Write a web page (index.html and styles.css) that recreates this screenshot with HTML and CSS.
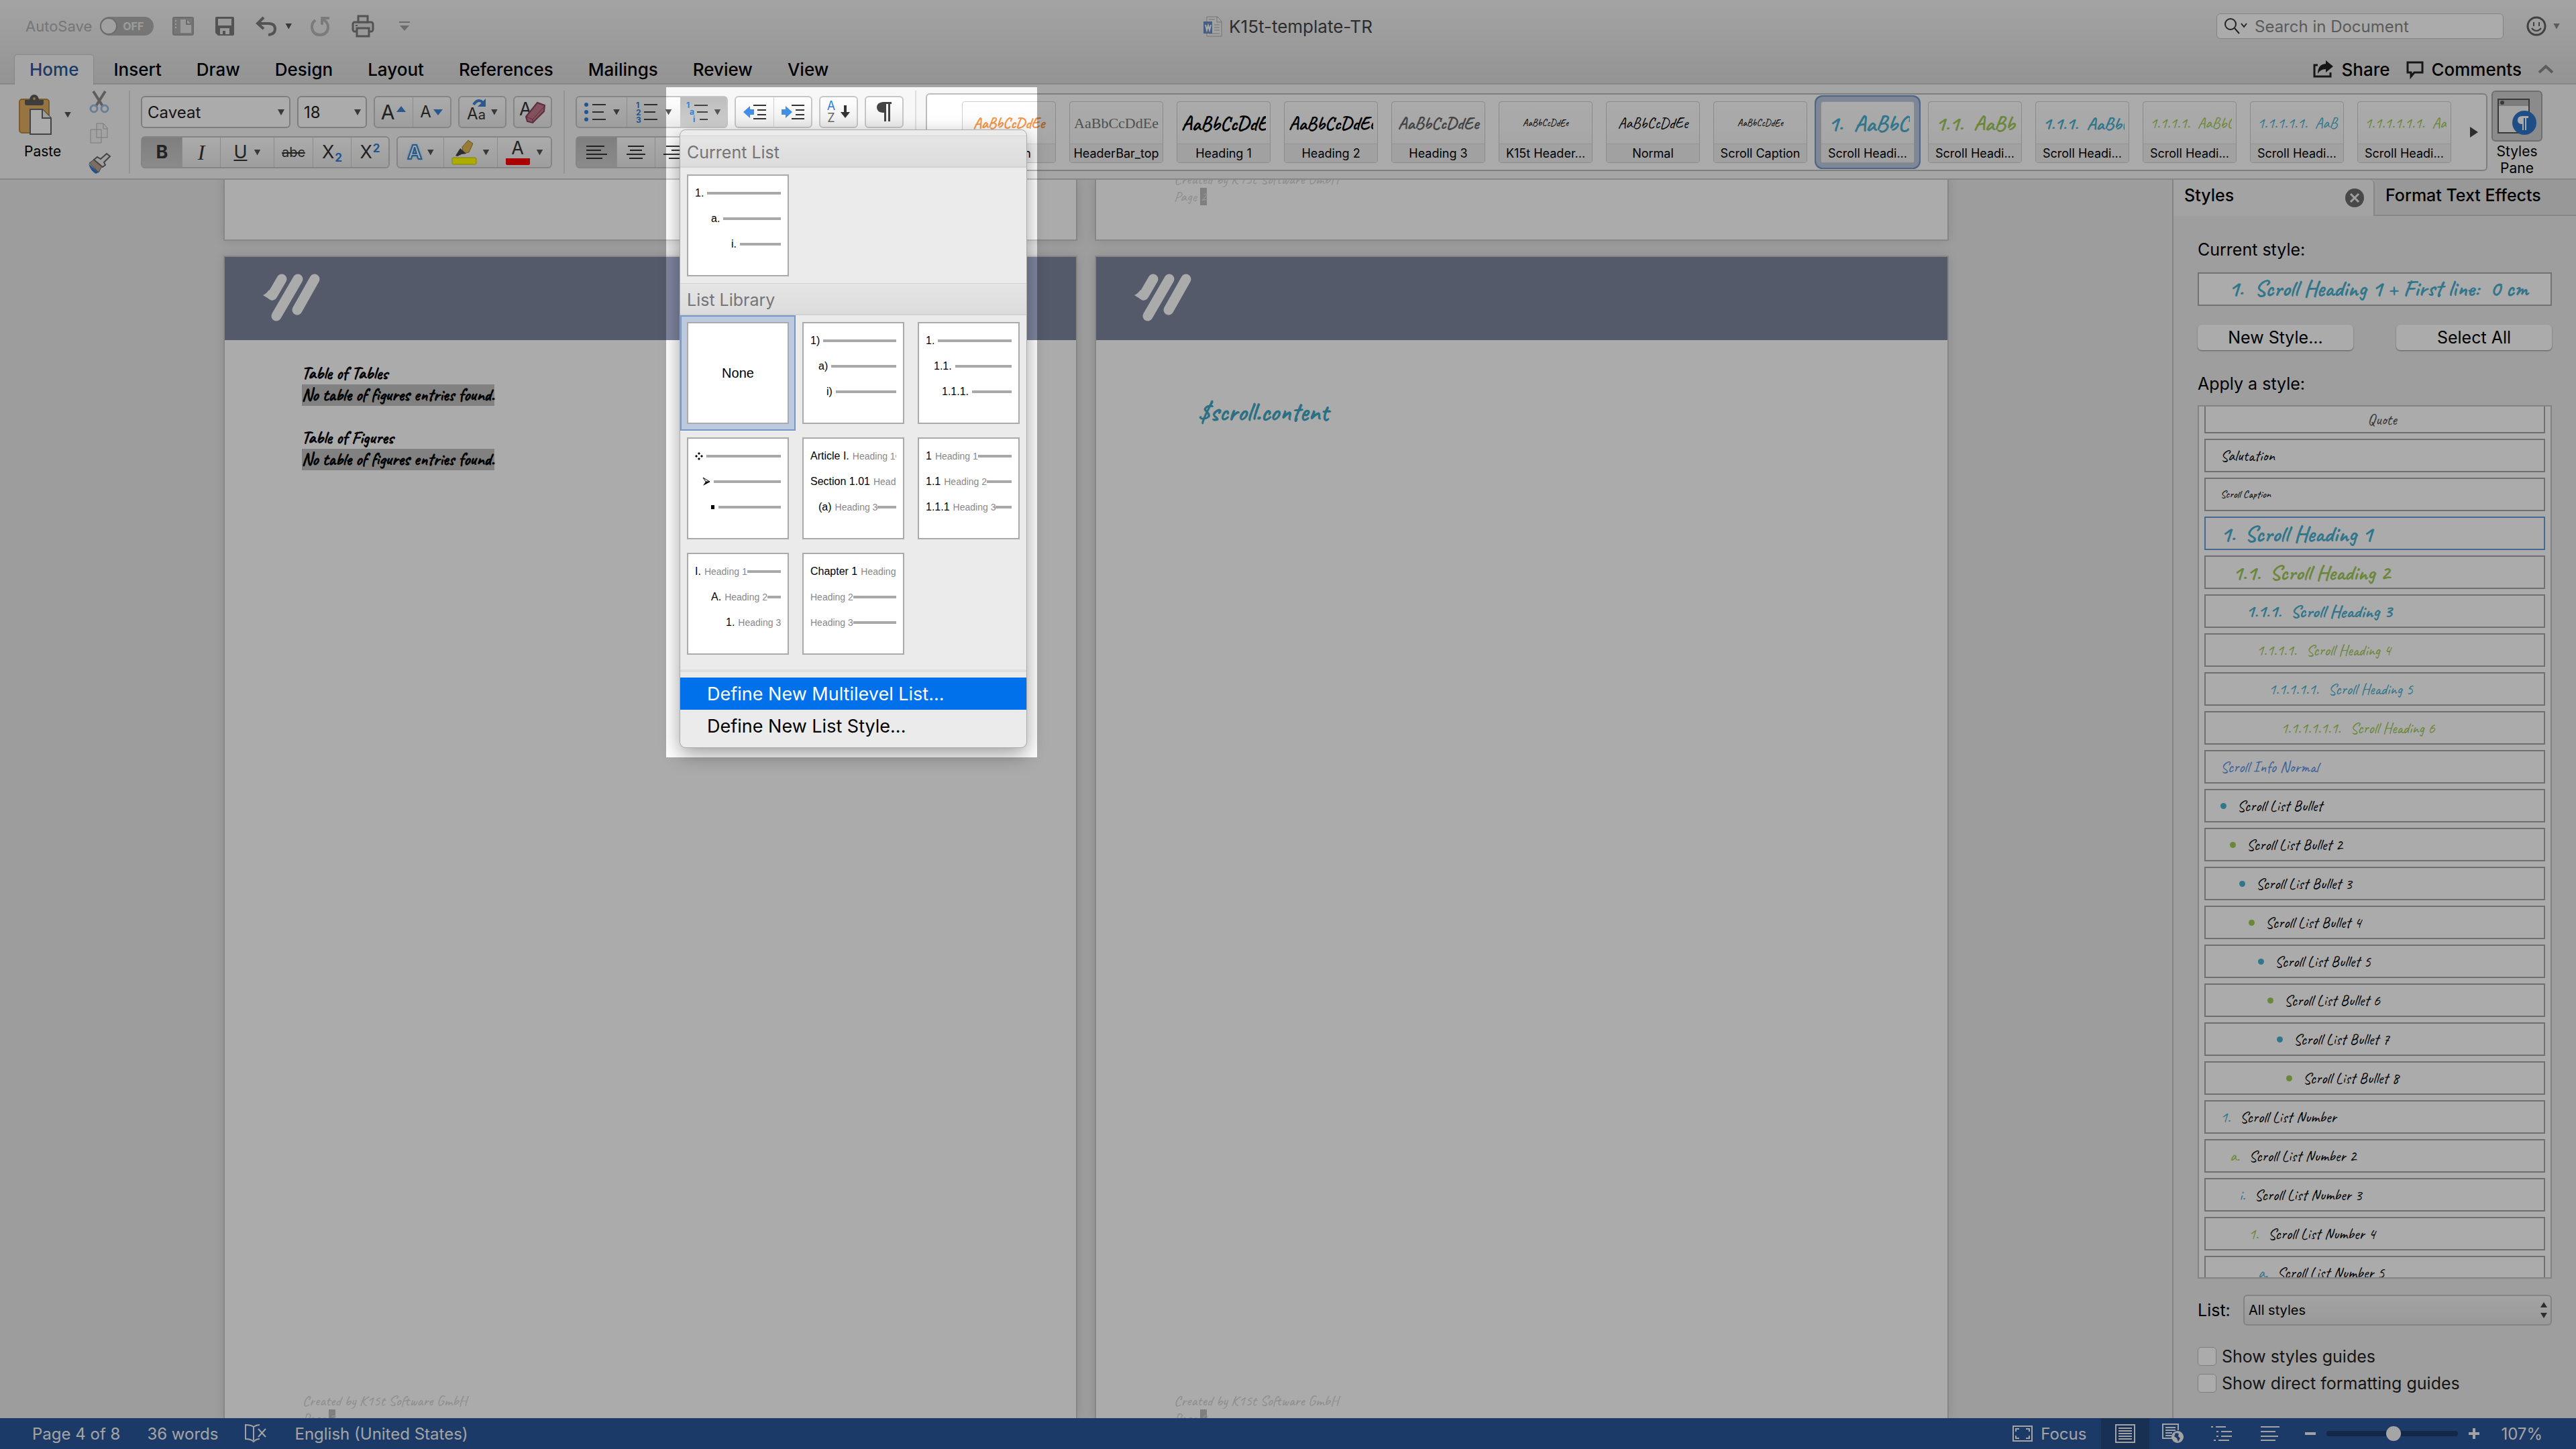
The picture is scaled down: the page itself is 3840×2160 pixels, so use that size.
FILE: index.html
```html
<!DOCTYPE html>
<html lang="en">
<head>
    <meta charset="UTF-8">
    <meta name="viewport" content="width=device-width, initial-scale=1.0">
    <title>K15t-template-TR</title>
    <link rel="stylesheet" href="styles.css">
</head>
<body>
    <header class="titlebar">
        <div class="quick-row">
            <div class="quick-access">
                <label class="autosave">AutoSave
                    <span class="switch"><input type="checkbox"><span class="knob"></span>OFF</span>
                </label>
                <button type="button" class="icon-btn" aria-label="Document gallery">
                    <svg width="32" height="28" viewBox="0 0 32 28"><rect x="1" y="1" width="30" height="26" rx="2" fill="#b0b0b0" stroke="#a0a0a0" stroke-width="2"/><path d="M12 4h9l7 7v13H12z" fill="#e4e4e4"/><path d="M21 4v7h7" fill="none" stroke="#a0a0a0" stroke-width="2"/><path d="M5 5v2M5 10v2M5 15v2" stroke="#eee" stroke-width="2"/></svg>
                </button>
                <button type="button" class="icon-btn" aria-label="Save">
                    <svg width="28" height="28" viewBox="0 0 28 28"><path d="M0 2q0-2 2-2h24q2 0 2 2v24q0 2-2 2H4l-4-4z" fill="#7c7c7c"/><path d="M4 3h20v10H4z M7 17h14v9h-6v-5h-4v5H7z" fill="#e6e6e6"/></svg>
                </button>
                <button type="button" class="icon-btn undo" aria-label="Undo">
                    <svg width="32" height="30" viewBox="0 0 32 30"><path d="M12 2L3 11l9 8M3 11h16q10 0 10 8t-10 9" fill="none" stroke="#7c7c7c" stroke-width="4"/></svg>
                    <span class="caret"></span>
                </button>
                <button type="button" class="icon-btn" aria-label="Redo">
                    <svg width="30" height="30" viewBox="0 0 30 30"><path d="M7 6q-6 5-5 12 2 10 12 10t12-10q1-9-8-13M17 13V3h11" fill="none" stroke="#b8b8b8" stroke-width="4"/></svg>
                </button>
                <button type="button" class="icon-btn" aria-label="Print">
                    <svg width="32" height="32" viewBox="0 0 32 32"><rect x="1" y="10" width="30" height="14" rx="3" fill="#e0e0e0" stroke="#7c7c7c" stroke-width="3"/><path d="M9 1h14v9H9z M7 19h18v12H7z" fill="#e6e6e6" stroke="#7c7c7c" stroke-width="3"/><path d="M5 15h3" stroke="#7c7c7c" stroke-width="2"/></svg>
                </button>
                <button type="button" class="icon-btn customize" aria-label="Customize toolbar">
                    <svg width="16" height="16" viewBox="0 0 16 16"><path d="M0 1h16v2H0z M1 7h14l-7 8z" fill="#a2a2a2"/></svg>
                </button>
            </div>
            <div class="doc-title">
                <svg width="28" height="31" viewBox="0 0 28 31"><path d="M5 1h16l6 7v22H5z" fill="#f2f2f2" stroke="#aaa" stroke-width="1"/><path d="M20 1v8h7M16 13h8M16 17h8M16 21h8M8 26h16M8 5h9" fill="none" stroke="#aaa" stroke-width="1"/><rect y="8" width="13" height="18" fill="#6a8cc4"/><path d="M3 13l2 8 2-7 2 7 2-8" fill="none" stroke="#fff" stroke-width="2"/></svg>
                <span>K15t-template-TR</span>
            </div>
            <div class="title-right">
                <label class="search">
                    <svg width="36" height="26" viewBox="0 0 36 26"><circle cx="10" cy="10" r="8" fill="none" stroke="#333" stroke-width="2"/><path d="M16 16l7 8M26 9l4 5 4-5" fill="none" stroke="#333" stroke-width="2"/></svg>
                    <input type="search" placeholder="Search in Document" aria-label="Search in Document">
                </label>
                <button type="button" class="icon-btn smiley" aria-label="Feedback">
                    <svg width="30" height="30" viewBox="0 0 30 30"><circle cx="15" cy="15" r="13" fill="none" stroke="#606060" stroke-width="3"/><path d="M11 9v6M19 9v6M8 18q7 8 14 0" fill="none" stroke="#606060" stroke-width="2"/></svg>
                    <span class="caret pale"></span>
                </button>
            </div>
        </div>
        <div class="tab-row">
            <nav class="tabs">
                <button type="button" class="tab active">Home</button>
                <button type="button" class="tab">Insert</button>
                <button type="button" class="tab">Draw</button>
                <button type="button" class="tab">Design</button>
                <button type="button" class="tab">Layout</button>
                <button type="button" class="tab">References</button>
                <button type="button" class="tab">Mailings</button>
                <button type="button" class="tab">Review</button>
                <button type="button" class="tab">View</button>
            </nav>
            <div class="tab-actions">
                <button type="button" class="text-btn">
                    <svg width="30" height="26" viewBox="0 0 30 26"><path d="M7 7H2v17h24v-6" fill="none" stroke="#222" stroke-width="3"/><path d="M19 0l11 9-11 9v-5q-8 0-12 7 0-14 12-15z" fill="#222"/></svg>
                    Share
                </button>
                <button type="button" class="text-btn">
                    <svg width="26" height="25" viewBox="0 0 26 25"><path d="M2 2h22v15H12l-5 6v-6H2z" fill="none" stroke="#222" stroke-width="3"/></svg>
                    Comments
                </button>
                <button type="button" class="icon-btn" aria-label="Collapse ribbon">
                    <svg width="24" height="14" viewBox="0 0 24 14"><path d="M2 12l10-9 10 9" fill="none" stroke="#8a8a8a" stroke-width="4"/></svg>
                </button>
            </div>
        </div>
    </header>

    <section class="ribbon">
        <div class="paste-group">
            <button type="button" class="paste">
                <span class="paste-icon">
                    <svg width="50" height="60" viewBox="0 0 50 60"><rect x="1" y="7" width="44" height="50" rx="4" fill="#e3ad62" stroke="#b98840" stroke-width="2"/><path d="M9 8h7q1-8 7-8t7 8h7v5q0 3-3 3H12q-3 0-3-3z" fill="#5b5b5b"/><circle cx="23" cy="6" r="2" fill="#e3ad62"/><path d="M17 22h18l13 13v24H17z" fill="#fff" stroke="#666" stroke-width="2"/><path d="M35 22v13h13" fill="#eee" stroke="#666" stroke-width="2"/></svg>
                    <span class="caret"></span>
                </span>
                <span class="paste-label">Paste</span>
            </button>
            <div class="clip-tools">
                <button type="button" class="icon-btn" aria-label="Cut"><svg width="30" height="34" viewBox="0 0 30 34"><path d="M6 1l14 22M24 1L10 23" stroke="#8c8c8c" stroke-width="4"/><circle cx="7" cy="27" r="5" fill="none" stroke="#9dbbe2" stroke-width="3"/><circle cx="23" cy="27" r="5" fill="none" stroke="#9dbbe2" stroke-width="3"/></svg></button>
                <button type="button" class="icon-btn" aria-label="Copy"><svg width="28" height="32" viewBox="0 0 28 32"><path d="M1 10h16v20H1z M10 1h10l6 7v14H10z M20 1v8h6" fill="#f4f4f4" stroke="#b4b4b4" stroke-width="1"/></svg></button>
                <button type="button" class="icon-btn" aria-label="Format painter"><svg width="34" height="30" viewBox="0 0 34 30"><path d="M1 15l15 13-4 2Q4 26 1 15z" fill="#3b7ac8"/><path d="M2 14l7-5 12 10-5 9z" fill="#b9a590" stroke="#666" stroke-width="1"/><path d="M9 9l5-4 5 3 9-8 5 4-9 9 2 4-4 3z" fill="#eee" stroke="#666" stroke-width="2"/></svg></button>
            </div>
        </div>

        <div class="sep"></div>

        <div class="tool-group font-tools">
            <div class="tool-row">
                <span class="combo combo-font"><select aria-label="Font"><option>Caveat</option></select><span class="caret"></span></span>
                <span class="combo combo-size"><select aria-label="Font size"><option>18</option></select><span class="caret"></span></span>
                <div class="btn-set">
                    <button type="button" class="cell w56"><span class="glyph big">A</span><svg width="16" height="22" viewBox="0 0 16 22"><path d="M1 11L8 2l7 9z" fill="#3f83d6"/></svg></button>
                    <button type="button" class="cell w56"><span class="glyph">A</span><svg width="16" height="12" viewBox="0 0 16 12"><path d="M1 2h14l-7 9z" fill="#3f83d6"/></svg></button>
                </div>
                <div class="btn-set">
                    <button type="button" class="cell w68" aria-label="Change case"><span class="case-glyph">A<small>a</small><svg width="22" height="14" viewBox="0 0 22 14"><path d="M2 10Q8 0 16 7" fill="none" stroke="#3f83d6" stroke-width="4"/><path d="M20 1v12H8z" fill="#3f83d6"/></svg></span><span class="caret"></span></button>
                </div>
                <div class="btn-set">
                    <button type="button" class="cell w54" aria-label="Clear formatting"><span class="clear-glyph">A<svg width="32" height="34" viewBox="0 0 32 34"><path d="M2 23L19 2l11 4-1 9-17 17-8-2z" fill="#c4788c" stroke="#8c4258" stroke-width="2"/><path d="M2 23l10 4 18-20M12 27v5" fill="none" stroke="#8c4258" stroke-width="1"/></svg></span></button>
                </div>
            </div>
            <div class="tool-row">
                <div class="btn-set">
                    <button type="button" class="cell w59 pressed"><b>B</b></button>
                    <button type="button" class="cell w57 serif"><i>I</i></button>
                    <button type="button" class="cell w80"><u>U</u><span class="caret split"></span></button>
                    <button type="button" class="cell w58 small"><s>abc</s></button>
                    <button type="button" class="cell w57">X<sub>2</sub></button>
                    <button type="button" class="cell w56">X<sup>2</sup></button>
                </div>
                <div class="btn-set">
                    <button type="button" class="cell w68"><span class="effects">A</span><span class="caret"></span></button>
                    <button type="button" class="cell w80" aria-label="Highlight"><svg width="36" height="38" viewBox="0 0 36 38"><path d="M15 11L24 1l7 5-6 13-9 2z" fill="#e0b94e" stroke="#a58130" stroke-width="1"/><path d="M12 13l9 8-7 1-6 3-3-1z" fill="#444"/><rect y="27" width="36" height="10" rx="2" fill="#ffff00" stroke="#c6c600" stroke-width="1"/></svg><span class="caret split"></span></button>
                    <button type="button" class="cell w80"><span class="color-glyph">A</span><span class="caret split"></span></button>
                </div>
            </div>
        </div>

        <div class="sep"></div>

        <div class="tool-group">
            <div class="tool-row">
                <div class="btn-set">
                    <button type="button" class="cell w74" aria-label="Bullets"><svg width="34" height="30" viewBox="0 0 34 30"><g fill="#2f7fdb"><circle cx="4" cy="4" r="3"/><circle cx="4" cy="15" r="3"/><circle cx="4" cy="26" r="3"/></g><path d="M13 4h20M13 15h17M13 26h20" stroke="#444" stroke-width="2"/></svg><span class="caret split"></span></button>
                    <button type="button" class="cell w80" aria-label="Numbering"><svg width="34" height="32" viewBox="0 0 34 32"><g class="svg-num" font-size="12"><text x="0" y="10">1</text><text x="0" y="21">2</text><text x="0" y="32">3</text></g><path d="M12 5h20M12 16h17M12 27h20" stroke="#444" stroke-width="2"/></svg><span class="caret split"></span></button>
                    <div class="menu-anchor">
                        <button type="button" class="cell w69 pressed" aria-label="Multilevel list" aria-expanded="true"><svg width="34" height="32" viewBox="0 0 34 32"><g class="svg-num" font-size="12"><text x="0" y="10">1</text><text x="5" y="20">a</text><text x="10" y="31">i</text></g><path d="M12 6h20M16 16h16M20 27h12" stroke="#444" stroke-width="2"/></svg><span class="caret"></span></button>

                        <div class="menu">
                            <h2 class="menu-head">Current List</h2>
                            <div class="tiles">
                                <button type="button" class="tile">
                                    <span class="line">1.<i class="bar"></i></span>
                                    <span class="line in2">a.<i class="bar"></i></span>
                                    <span class="line in4">i.<i class="bar"></i></span>
                                </button>
                            </div>
                            <h2 class="menu-head">List Library</h2>
                            <div class="tiles">
                                <button type="button" class="tile none chosen">None</button>
                                <button type="button" class="tile">
                                    <span class="line">1)<i class="bar"></i></span>
                                    <span class="line in1">a)<i class="bar"></i></span>
                                    <span class="line in2">i)<i class="bar"></i></span>
                                </button>
                                <button type="button" class="tile">
                                    <span class="line">1.<i class="bar"></i></span>
                                    <span class="line in1">1.1.<i class="bar"></i></span>
                                    <span class="line in2">1.1.1.<i class="bar"></i></span>
                                </button>
                                <button type="button" class="tile">
                                    <span class="line"><svg width="12" height="12" viewBox="0 0 12 12"><path d="M6 0l2 2-2 2-2-2z M6 8l2 2-2 2-2-2z M2 4l2 2-2 2-2-2z M10 4l2 2-2 2-2-2z"/></svg><i class="bar"></i></span>
                                    <span class="line in1"><svg width="11" height="12" viewBox="0 0 11 12"><path d="M0 0l10 6H4z" fill="#fff" stroke="#000"/><path d="M0 12l11-6H4z"/></svg><i class="bar"></i></span>
                                    <span class="line in2"><svg width="6" height="6" viewBox="0 0 6 6"><path d="M0 0h5v6H0z"/></svg><i class="bar"></i></span>
                                </button>
                                <button type="button" class="tile">
                                    <span class="line">Article I.<em>Heading 1</em><i class="bar"></i></span>
                                    <span class="line">Section 1.01<em>Headi</em></span>
                                    <span class="line in1">(a)<em>Heading 3</em><i class="bar"></i></span>
                                </button>
                                <button type="button" class="tile">
                                    <span class="line">1<em>Heading 1</em><i class="bar"></i></span>
                                    <span class="line">1.1<em>Heading 2</em><i class="bar"></i></span>
                                    <span class="line">1.1.1<em>Heading 3</em><i class="bar"></i></span>
                                </button>
                                <button type="button" class="tile">
                                    <span class="line">I.<em>Heading 1</em><i class="bar"></i></span>
                                    <span class="line in2">A.<em>Heading 2</em><i class="bar"></i></span>
                                    <span class="line in3">1.<em>Heading 3</em></span>
                                </button>
                                <button type="button" class="tile">
                                    <span class="line">Chapter 1<em>Heading</em></span>
                                    <span class="line"><em>Heading 2</em><i class="bar"></i></span>
                                    <span class="line"><em>Heading 3</em><i class="bar"></i></span>
                                </button>
                            </div>
                            <div class="menu-rule"></div>
                            <button type="button" class="menu-item current">Define New Multilevel List...</button>
                            <button type="button" class="menu-item">Define New List Style...</button>
                        </div>
                        <div class="spotlight"></div>
                    </div>
                </div>
                <div class="btn-set">
                    <button type="button" class="cell w56" aria-label="Decrease indent"><svg width="34" height="24" viewBox="0 0 34 24"><path d="M0 12l10-9v5h6v8h-6v5z" fill="#3f8ee8"/><path d="M15 2h19M21 9h13M21 16h13M15 22h19" stroke="#333" stroke-width="2"/></svg></button>
                    <button type="button" class="cell w56" aria-label="Increase indent"><svg width="34" height="24" viewBox="0 0 34 24"><path d="M16 12L6 3v5H0v8h6v5z" fill="#3f8ee8"/><path d="M15 2h19M21 9h13M21 16h13M15 22h19" stroke="#333" stroke-width="2"/></svg></button>
                </div>
                <div class="btn-set">
                    <button type="button" class="cell w54"><span class="sort-glyph"><span>A</span><span>Z</span></span><svg width="14" height="20" viewBox="0 0 14 20"><path d="M7 0v12" stroke="#333" stroke-width="4"/><path d="M0 10h14l-7 9z" fill="#333"/></svg></button>
                </div>
                <div class="btn-set">
                    <button type="button" class="cell w54" aria-label="Show formatting marks"><svg width="24" height="30" viewBox="0 0 24 30"><path d="M23 0H10Q1 1 1 8t9 8h2v13h3V3h3v26h3V3h2z" fill="#444"/></svg></button>
                </div>
            </div>
            <div class="tool-row">
                <div class="btn-set">
                    <button type="button" class="cell w59 pressed" aria-label="Align left"><svg width="32" height="22" viewBox="0 0 32 22"><path d="M0 2h27M0 8h22M0 14h31M0 20h24" stroke="#333" stroke-width="2"/></svg></button>
                    <button type="button" class="cell w57" aria-label="Center"><svg width="30" height="22" viewBox="0 0 30 22"><path d="M3 2h24M6 8h18M1 14h28M5 20h20" stroke="#333" stroke-width="2"/></svg></button>
                    <button type="button" class="cell w57" aria-label="Align right"><svg width="32" height="22" viewBox="0 0 32 22"><path d="M4 2h28M12 8h20M0 14h32M8 20h24" stroke="#333" stroke-width="2"/></svg></button>
                </div>
            </div>
        </div>

        <div class="sep"></div>

        <div class="gallery">
            <div class="cards">
                <button type="button" class="card"><span class="preview size-m bold orange">AaBbCcDdEe</span><span class="card-name">Caption</span></button>
                <button type="button" class="card"><span class="preview roman">AaBbCcDdEe</span><span class="card-name">HeaderBar_top</span></button>
                <button type="button" class="card"><span class="preview size-xl bold">AaBbCcDdEe</span><span class="card-name">Heading 1</span></button>
                <button type="button" class="card"><span class="preview size-l bold">AaBbCcDdEe</span><span class="card-name">Heading 2</span></button>
                <button type="button" class="card"><span class="preview size-h3 bold grey">AaBbCcDdEe</span><span class="card-name">Heading 3</span></button>
                <button type="button" class="card"><span class="preview size-s">AaBbCcDdEe</span><span class="card-name">K15t Header...</span></button>
                <button type="button" class="card"><span class="preview size-m">AaBbCcDdEe</span><span class="card-name">Normal</span></button>
                <button type="button" class="card"><span class="preview size-s">AaBbCcDdEe</span><span class="card-name">Scroll Caption</span></button>
                <button type="button" class="card selected"><span class="preview cut size-s1 bold teal">1.&nbsp; AaBbC</span><span class="card-name">Scroll Headi...</span></button>
                <button type="button" class="card"><span class="preview cut size-s2 bold green">1.1.&nbsp; AaBbC</span><span class="card-name">Scroll Headi...</span></button>
                <button type="button" class="card"><span class="preview cut size-s3 bold teal">1.1.1.&nbsp; AaBbC</span><span class="card-name">Scroll Headi...</span></button>
                <button type="button" class="card"><span class="preview cut size-m green">1.1.1.1.&nbsp; AaBbCc</span><span class="card-name">Scroll Headi...</span></button>
                <button type="button" class="card"><span class="preview cut size-m teal">1.1.1.1.1.&nbsp; AaBb</span><span class="card-name">Scroll Headi...</span></button>
                <button type="button" class="card"><span class="preview cut size-m green">1.1.1.1.1.1.&nbsp; AaB</span><span class="card-name">Scroll Headi...</span></button>
            </div>
            <button type="button" class="icon-btn gallery-next" aria-label="More styles"><svg width="12" height="16" viewBox="0 0 12 16"><path d="M0 0l12 8-12 8z" fill="#444"/></svg></button>
        </div>
        <button type="button" class="styles-pane-btn">
            <span class="styles-pane-icon"><svg width="58" height="54" viewBox="0 0 58 54"><path d="M1 2h46v50H1z" fill="#f6f6f6" stroke="#555" stroke-width="2"/><path d="M2 3h44v9H2z" fill="#bbb"/><circle cx="7" cy="7" r="3" fill="#555"/><circle cx="40" cy="37" r="18" fill="#2f75c8"/><path d="M46 27h-9q-7 0-7 6t7 6v9h2V30h2v18h2V30h3z" fill="#fff"/></svg></span>
            Styles<br>Pane
        </button>
    </section>

    <main class="main">
        <div class="workspace">
            <article class="page page-end"></article>
            <article class="page page-end">
                <footer class="page-foot">Created by K15t Software GmbH<br>Page <mark>2</mark></footer>
            </article>
            <article class="page">
                <div class="band">
                    <svg class="logo" width="86" height="72" viewBox="0 0 86 72"><path d="M28 8L14 32M52 8L20 63M77 8L51 54" stroke="#fff" stroke-width="15" stroke-linecap="round"/><path d="M0 32q5-2 9-8l10 13q-5 4-8 2z" fill="#fff"/></svg>
                </div>
                <div class="page-body">
                    <p>Table of Tables</p>
                    <p><mark>No table of figures entries found.</mark></p>
                    <p class="spaced">Table of Figures</p>
                    <p><mark>No table of figures entries found.</mark></p>
                </div>
                <footer class="page-foot">Created by K15t Software GmbH<br>Page <mark>3</mark></footer>
            </article>
            <article class="page">
                <div class="band">
                    <svg class="logo" width="86" height="72" viewBox="0 0 86 72"><path d="M28 8L14 32M52 8L20 63M77 8L51 54" stroke="#fff" stroke-width="15" stroke-linecap="round"/><path d="M0 32q5-2 9-8l10 13q-5 4-8 2z" fill="#fff"/></svg>
                </div>
                <div class="page-body">
                    <p class="placeholder">$scroll.content</p>
                </div>
                <footer class="page-foot">Created by K15t Software GmbH<br>Page <mark>4</mark></footer>
            </article>
        </div>

        <aside class="pane">
            <div class="pane-tabs">
                <div class="pane-tab active">Styles
                    <button type="button" class="icon-btn" aria-label="Close pane"><svg width="28" height="28" viewBox="0 0 28 28"><circle cx="14" cy="14" r="14" fill="#6c6c6c"/><path d="M8 8l12 12M20 8L8 20" stroke="#eee" stroke-width="3"/></svg></button>
                </div>
                <div class="pane-tab">Format Text Effects</div>
            </div>
            <div class="pane-body">
                <h3>Current style:</h3>
                <div class="current-style">1.&nbsp; Scroll Heading 1 + First line:&nbsp; 0 cm</div>
                <div class="pane-buttons">
                    <button type="button">New Style...</button>
                    <button type="button">Select All</button>
                </div>
                <h3>Apply a style:</h3>
                <ul class="style-list">
                    <li class="clipped quote">Quote</li>
                    <li>Salutation</li>
                    <li class="caption">Scroll Caption</li>
                    <li class="h1 on"><span class="num">1.</span>Scroll Heading 1</li>
                    <li class="h2"><span class="num">1.1.</span>Scroll Heading 2</li>
                    <li class="h3"><span class="num">1.1.1.</span>Scroll Heading 3</li>
                    <li class="h4"><span class="num">1.1.1.1.</span>Scroll Heading 4</li>
                    <li class="h5"><span class="num">1.1.1.1.1.</span>Scroll Heading 5</li>
                    <li class="h6"><span class="num">1.1.1.1.1.1.</span>Scroll Heading 6</li>
                    <li class="info">Scroll Info Normal</li>
                    <li class="bullet l1">Scroll List Bullet</li>
                    <li class="bullet l2">Scroll List Bullet 2</li>
                    <li class="bullet l3">Scroll List Bullet 3</li>
                    <li class="bullet l4">Scroll List Bullet 4</li>
                    <li class="bullet l5">Scroll List Bullet 5</li>
                    <li class="bullet l6">Scroll List Bullet 6</li>
                    <li class="bullet l7">Scroll List Bullet 7</li>
                    <li class="bullet l8">Scroll List Bullet 8</li>
                    <li class="l1"><span class="num teal">1.</span>Scroll List Number</li>
                    <li class="l2"><span class="num green">a.</span>Scroll List Number 2</li>
                    <li class="l3"><span class="num teal">i.</span>Scroll List Number 3</li>
                    <li class="l4"><span class="num green">1.</span>Scroll List Number 4</li>
                    <li class="l5"><span class="num teal">a.</span>Scroll List Number 5</li>
                </ul>
                <div class="list-filter">
                    <label for="filter">List:</label>
                    <span class="filter-box">
                        <select id="filter"><option>All styles</option></select>
                        <svg width="10" height="24" viewBox="0 0 10 24"><path d="M0 8l5-8 5 8z M0 16h10l-5 8z" fill="#444"/></svg>
                    </span>
                </div>
                <label class="check"><input type="checkbox">Show styles guides</label>
                <label class="check"><input type="checkbox">Show direct formatting guides</label>
            </div>
        </aside>
    </main>

    <footer class="status">
        <span class="st-page">Page 4 of 8</span>
        <span class="st-words">36 words</span>
        <button type="button" class="icon-btn" aria-label="Proofing"><svg width="32" height="28" viewBox="0 0 32 28"><path d="M13 24V4Q9 1 1 1v21q8 0 12 4 4-4 9-4M13 4q4-3 9-3" fill="none" stroke="#f4f4f4" stroke-width="2"/><path d="M20 7l11 12M31 7L20 19" stroke="#f4f4f4" stroke-width="2"/></svg></button>
        <span class="st-lang">English (United States)</span>
        <button type="button" class="text-btn focus">
            <svg width="30" height="24" viewBox="0 0 30 24"><path d="M1 1h28v22H1z" fill="none" stroke="#f4f4f4" stroke-width="2"/><path d="M5 9V5h5M20 5h5v4M25 15v4h-5M10 19H5v-4" fill="none" stroke="#f4f4f4" stroke-width="2"/></svg>
            Focus
        </button>
        <div class="views">
            <button type="button" class="view on" aria-label="Print layout"><svg width="30" height="28" viewBox="0 0 30 28"><path d="M1 1h28v26H1z M5 6h20M5 10h20M5 14h20M5 18h20M5 22h20" fill="none" stroke="#f4f4f4" stroke-width="2"/></svg></button>
            <button type="button" class="view" aria-label="Web layout"><svg width="34" height="30" viewBox="0 0 34 30"><path d="M15 22H1V1h23v9M5 6h15M5 10h15M5 14h10M5 18h9" fill="none" stroke="#f4f4f4" stroke-width="2"/><circle cx="23" cy="20" r="9" fill="#f4f4f4"/><path d="M20 14l5 1-1 4 3 3-3 5-2-5-4-3z" fill="#2b579a"/></svg></button>
            <button type="button" class="view" aria-label="Outline"><svg width="32" height="24" viewBox="0 0 32 24"><path d="M0 2h3M7 2h15M8 9h3M15 9h16M8 16h3M15 16h16M4 22h3M11 22h16" stroke="#f4f4f4" stroke-width="2"/></svg></button>
            <button type="button" class="view" aria-label="Draft"><svg width="28" height="24" viewBox="0 0 28 24"><path d="M0 2h28M0 9h22M0 16h26M0 22h22" stroke="#f4f4f4" stroke-width="2"/></svg></button>
        </div>
        <button type="button" class="icon-btn" aria-label="Zoom out"><svg width="16" height="16" viewBox="0 0 16 16"><path d="M0 8h16" stroke="#f4f4f4" stroke-width="4"/></svg></button>
        <input class="zoom" type="range" min="0" max="100" value="51" aria-label="Zoom">
        <button type="button" class="icon-btn" aria-label="Zoom in"><svg width="16" height="16" viewBox="0 0 16 16"><path d="M0 8h16M8 0v16" stroke="#f4f4f4" stroke-width="4"/></svg></button>
        <span class="st-zoom">107%</span>
    </footer>
</body>
</html>
```

FILE: styles.css
```css
* {
    box-sizing: border-box;
}
body {
    margin: 0;
    height: 100vh;
    display: flex;
    flex-direction: column;
    overflow: hidden;
    font-family: Inter, "Liberation Sans", sans-serif;
    font-size: 24px;
    color: #000;
    background: #eaeaea;
}
button, input, select {
    font: inherit;
    color: inherit;
}
button {
    background: none;
    border: none;
    padding: 0;
    margin: 0;
}
svg {
    display: block;
    flex: none;
    overflow: visible;
}
h2, h3, p, ul {
    margin: 0;
    padding: 0;
    font-weight: normal;
}
.teal {
    color: #4ab0d0;
}
.green {
    color: #a0c956;
}
.orange {
    color: #f79646;
}
.grey {
    color: #666;
}
.bold {
    font-weight: bold;
}
.caret {
    flex: none;
    width: 10px;
    height: 9px;
    background: #555;
    clip-path: polygon(0 0, 100% 0, 50% 100%);
}
.caret.pale {
    background: #8a8a8a;
}
.icon-btn {
    display: flex;
    align-items: center;
}

/* title bar */
.titlebar {
    flex: none;
    height: 126px;
    display: flex;
    flex-direction: column;
    justify-content: space-between;
    background: linear-gradient(#f4f4f4, #dcdcdc);
    border-bottom: 2px solid #cacaca;
}
.quick-row {
    display: grid;
    grid-template-columns: 1fr auto 1fr;
    align-items: center;
    height: 78px;
    padding: 0 24px;
}
.quick-access {
    display: flex;
    align-items: center;
    gap: 32px;
    padding-left: 14px;
}
.autosave {
    display: flex;
    align-items: center;
    gap: 12px;
    margin-right: -4px;
    font-size: 22px;
    color: #b0b0b0;
}
.switch {
    display: flex;
    align-items: center;
    gap: 8px;
    width: 80px;
    height: 28px;
    border-radius: 14px;
    background: #b0b0b0;
    color: #e8e8e8;
    font-size: 16px;
    font-weight: bold;
}
.switch input {
    display: none;
}
.knob {
    width: 26px;
    height: 26px;
    border-radius: 50%;
    background: #f0f0f0;
    border: 2px solid #a0a0a0;
}
.undo {
    gap: 12px;
    margin-right: -4px;
}
.customize {
    margin-left: 6px;
}
.doc-title {
    display: flex;
    align-items: center;
    gap: 10px;
    color: #444;
    font-size: 26px;
}
.title-right {
    display: flex;
    justify-content: flex-end;
    align-items: center;
    gap: 34px;
}
.search {
    display: flex;
    align-items: center;
    gap: 10px;
    width: 428px;
    height: 38px;
    padding: 0 10px;
    background: #fff;
    border: 1px solid #c4c4c4;
    border-radius: 6px;
}
.search input {
    flex: 1;
    min-width: 0;
    border: none;
    outline: none;
    background: none;
    padding: 0;
}
.search input::placeholder {
    color: #888;
}
.smiley {
    gap: 10px;
}
.tab-row {
    display: flex;
    justify-content: space-between;
    padding: 0 33px 0 22px;
}
.tabs {
    display: flex;
    gap: 8px;
    margin-bottom: -2px;
}
.tab {
    height: 44px;
    padding: 0 22px;
    font-size: 26px;
    font-weight: 500;
    line-height: 40px;
    border-radius: 4px 4px 0 0;
}
.tab.active {
    background: #f7f7f7;
    color: #2b579a;
    box-shadow: 0 0 2px #999;
    clip-path: inset(-3px -3px 0 -3px);
}
.tab-actions {
    display: flex;
    align-items: center;
    gap: 24px;
}
.text-btn {
    display: flex;
    align-items: center;
    gap: 12px;
    font-size: 26px;
    font-weight: 500;
}

/* ribbon */
.ribbon {
    position: relative;
    z-index: 2;
    flex: none;
    display: flex;
    height: 142px;
    padding: 9px 50px 7px 22px;
    background: #f7f7f7;
    border-bottom: 2px solid #cacaca;
}
.paste-group {
    display: flex;
    gap: 18px;
}
.paste {
    display: flex;
    flex-direction: column;
    gap: 12px;
    width: 90px;
    padding: 6px 0 0 6px;
    font-size: 21px;
    text-align: left;
}
.paste-icon {
    display: flex;
    align-items: center;
    gap: 18px;
}
.paste-label {
    padding-left: 8px;
}
.clip-tools {
    display: flex;
    flex-direction: column;
    justify-content: space-between;
    align-items: center;
    width: 36px;
}
.sep {
    flex: none;
    width: 2px;
    margin: 0 16px 0 17px;
    background: #dedede;
}
.paste-group + .sep {
    margin-left: 26px;
}
.tool-group {
    display: flex;
    flex-direction: column;
    justify-content: center;
    gap: 12px;
}
.tool-row {
    display: flex;
    gap: 10px;
}
.combo {
    position: relative;
    height: 48px;
}
.combo select {
    appearance: none;
    width: 100%;
    height: 100%;
    padding: 0 8px;
    background: #fff;
    border: 2px solid #bdbdbd;
    border-radius: 6px;
    color: #222;
}
.combo .caret {
    position: absolute;
    right: 9px;
    top: 20px;
}
.combo-font {
    width: 223px;
}
.combo-size {
    width: 104px;
}
.btn-set {
    display: flex;
    height: 48px;
    border: 2px solid #c6c6c6;
    border-radius: 6px;
    background: linear-gradient(#fff, #ececec);
}
.cell {
    display: flex;
    align-items: center;
    justify-content: center;
    gap: 8px;
    height: 44px;
    color: #333;
    font-size: 27px;
    line-height: 30px;
}
.cell + .cell {
    border-left: 1px solid #cfcfcf;
}
.cell.pressed {
    background: linear-gradient(#bdbdbd, #cfcfcf);
}
.split {
    margin-left: 2px;
}
.w54 {
    width: 54px;
}
.w56 {
    width: 56px;
}
.w57 {
    width: 57px;
}
.w58 {
    width: 58px;
}
.w59 {
    width: 59px;
}
.w68 {
    width: 68px;
}
.w69 {
    width: 69px;
}
.w74 {
    width: 74px;
}
.w80 {
    width: 80px;
}
.cell.small {
    font-size: 20px;
}
.cell.serif {
    font-family: "Liberation Serif", serif;
    font-size: 32px;
}
.cell sub, .cell sup {
    font-size: 17px;
    font-weight: bold;
    color: #2f7fdb;
    margin-left: -7px;
    line-height: 17px;
}
.cell sub {
    align-self: flex-end;
    padding-bottom: 5px;
}
.cell sup {
    align-self: flex-start;
    padding-top: 8px;
}
.glyph {
    font-size: 24px;
    margin-right: -6px;
}
.glyph.big {
    font-size: 30px;
}
.case-glyph, .clear-glyph {
    position: relative;
}
.case-glyph {
    padding-top: 6px;
    font-size: 24px;
}
.case-glyph small {
    font-size: 20px;
}
.case-glyph svg {
    position: absolute;
    left: 8px;
    top: -3px;
}
.clear-glyph {
    width: 40px;
    padding-bottom: 8px;
    text-align: left;
}
.clear-glyph svg {
    position: absolute;
    left: 8px;
    top: 3px;
}
.color-glyph {
    width: 36px;
    height: 38px;
    line-height: 26px;
    border-bottom: 10px solid #f00;
    border-radius: 2px;
}
.effects {
    color: #fff;
    font-size: 29px;
    font-weight: bold;
    -webkit-text-stroke: 2px #2f86cf;
    text-shadow: 0 0 4px #6db4ea;
}
.svg-num {
    fill: #2f7fdb;
    font-weight: bold;
}
.sort-glyph {
    display: flex;
    flex-direction: column;
    font-size: 18px;
    line-height: 18px;
    color: #666;
}
.sort-glyph span:first-child {
    color: #2f7fdb;
}

/* multilevel list menu */
.menu-anchor {
    position: relative;
}
.menu {
    position: absolute;
    z-index: 3;
    left: 0;
    top: 49px;
    width: 516px;
    padding: 8px 0;
    background: #ebebeb;
    border-radius: 8px;
    box-shadow: 0 0 0 1px #aaa, 0 10px 30px rgba(0, 0, 0, 0.4);
}
.menu-head {
    height: 48px;
    padding: 0 10px;
    font-size: 25px;
    line-height: 48px;
    color: #757575;
    background: linear-gradient(#e5e5e5, #dcdcdc);
    border-top: 1px solid #d2d2d2;
    border-bottom: 2px solid #d2d2d2;
}
.tiles {
    display: grid;
    grid-template-columns: repeat(3, 152px);
    gap: 20px;
    padding: 10px;
}
.tile {
    height: 152px;
    padding: 7px 10px;
    overflow: hidden;
    background: #fff;
    border: 2px solid #aaa;
    font-family: "Liberation Sans", Arial, sans-serif;
    font-size: 16px;
    display: flex;
    flex-direction: column;
}
.tile.none {
    align-items: center;
    justify-content: center;
    font-size: 20px;
}
.tile.chosen {
    box-shadow: 0 0 0 8px #bccadf, 0 0 0 10px #7697c9;
}
.line {
    display: flex;
    align-items: center;
    gap: 5px;
    width: 100%;
    height: 38px;
    overflow: hidden;
    white-space: nowrap;
}
.line em {
    font-size: 14px;
    font-style: normal;
    color: #888;
}
.line em + .bar {
    margin-left: -5px;
}
.bar {
    flex: 1;
    height: 4px;
    background: #a8a8a8;
}
.in1 {
    padding-left: 12px;
}
.in2 {
    padding-left: 24px;
}
.in3 {
    padding-left: 46px;
}
.in4 {
    padding-left: 54px;
}
.menu-rule {
    height: 4px;
    margin: 12px 0 8px;
    background: #dedede;
}
.menu-item {
    display: block;
    width: 100%;
    height: 48px;
    padding-left: 40px;
    text-align: left;
    font-size: 27px;
}
.menu-item.current {
    background: #0071eb;
    color: #fff;
}
/* darkens everything outside the open menu */
.spotlight {
    position: absolute;
    z-index: 4;
    left: -21px;
    top: -15px;
    width: 553px;
    height: 999px;
    box-shadow: 0 0 0 4000px rgba(0, 0, 0, 0.33);
    pointer-events: none;
}

/* style gallery */
.gallery {
    flex: 1;
    min-width: 0;
    align-self: center;
    display: flex;
    align-items: center;
    height: 116px;
    margin: 0 6px 0 -2px;
    background: #fff;
    border: 2px solid #bdbdbd;
    border-radius: 6px;
}
.cards {
    flex: 1;
    min-width: 0;
    display: flex;
    gap: 20px;
    padding: 10px 0 10px 52px;
    overflow: hidden;
}
.card {
    flex: none;
    width: 140px;
    height: 92px;
    display: flex;
    flex-direction: column;
    border: 1px solid #cfcfcf;
    border-radius: 4px;
    background: linear-gradient(#fff, #f6f6f6);
}
.card.selected {
    box-shadow: 0 0 0 7px #bccadf, 0 0 0 9px #7697c9;
}
.preview {
    height: 62px;
    width: 126px;
    margin: 0 auto;
    overflow: hidden;
    white-space: nowrap;
    line-height: 64px;
    font-family: Caveat, Lato, sans-serif;
}
.preview.cut {
    text-align: left;
    padding-left: 4px;
}
.preview.roman {
    font-family: "Liberation Serif", serif;
    font-size: 22px;
    color: #777;
}
.size-s {
    font-size: 15px;
}
.size-m {
    font-size: 23px;
}
.size-h3 {
    font-size: 26px;
}
.size-l {
    font-size: 28px;
}
.size-xl {
    font-size: 30px;
}
.size-s1 {
    font-size: 34px;
}
.size-s2 {
    font-size: 32px;
}
.size-s3 {
    font-size: 27px;
}
.card-name {
    width: 100%;
    height: 28px;
    border-top: 1px solid #dcdcdc;
    background: #f0f0f0;
    font-size: 18px;
    line-height: 28px;
}
.gallery-next {
    padding: 0 12px;
}
.styles-pane-btn {
    width: 76px;
    font-size: 21px;
    line-height: 25px;
    white-space: nowrap;
    display: block;
}
.styles-pane-icon {
    display: flex;
    justify-content: center;
    align-items: center;
    height: 76px;
    margin-bottom: 2px;
    background: #cfcfcf;
    border: 2px solid #a6a6a6;
    border-radius: 6px;
}

/* document */
.main {
    flex: 1;
    min-height: 0;
    display: flex;
}
.workspace {
    flex: 1;
    min-width: 0;
    overflow: hidden;
    display: grid;
    grid-template-columns: 39.2% 39.2%;
    grid-template-rows: 89px 1fr;
    justify-content: center;
    gap: 26px 30px;
    background: #eaeaea;
}
.page {
    display: flex;
    flex-direction: column;
    min-height: 0;
    overflow: hidden;
    background: #fff;
    box-shadow: 0 0 0 2px #c8c8c8, 0 0 16px rgba(0, 0, 0, 0.14);
    font-family: Caveat, Lato, sans-serif;
}
.band {
    height: 124px;
    padding: 25px 57px;
    background: #7e869f;
}
.page-body {
    flex: 1;
    padding: 34px 115px;
    font-size: 26px;
    font-weight: bold;
    line-height: 32px;
    -webkit-text-stroke: 1px currentColor;
}
.page-body mark {
    display: inline-block;
    background: #c0c0c0;
}
.spaced {
    margin-top: 32px;
}
.page-body .placeholder {
    padding: 58px 0 0 37px;
    font-size: 39px;
    color: #3fa6c4;
}
.page-foot {
    margin-bottom: -13px;
    padding-left: 116px;
    font-size: 22px;
    line-height: 26px;
    color: #d4d4d4;
}
.page-end .page-foot {
    margin-top: -14px;
}
.page-foot mark {
    display: inline-block;
    background: #bebebe;
    color: #e0e0e0;
}

/* styles pane */
.pane {
    flex: none;
    width: 602px;
    display: flex;
    flex-direction: column;
    background: #ececec;
    border-left: 2px solid #c4c4c4;
}
.pane-tabs {
    display: flex;
    height: 54px;
}
.pane-tab {
    flex: 1;
    padding: 0 16px;
    line-height: 46px;
    font-size: 25px;
    font-weight: 500;
    white-space: nowrap;
    background: #e3e3e3;
    border-bottom: 2px solid #c8c8c8;
}
.pane-tab.active {
    display: flex;
    justify-content: space-between;
    padding-right: 14px;
    background: #f3f3f3;
    border-right: 2px solid #c8c8c8;
    border-bottom: none;
    border-radius: 0 6px 0 0;
}
.pane-body {
    flex: 1;
    min-height: 0;
    display: flex;
    flex-direction: column;
    padding: 32px 36px;
}
.pane-body h3 {
    font-size: 25px;
    line-height: 36px;
}
.current-style {
    height: 50px;
    margin: 16px 0 28px;
    padding-left: 44px;
    border: 2px solid #aaa;
    background: #fff;
    font-family: Caveat, Lato, sans-serif;
    font-weight: bold;
    font-size: 34px;
    line-height: 44px;
    color: #4ab0d0;
    white-space: nowrap;
}
.pane-buttons {
    display: flex;
    justify-content: space-between;
    margin-bottom: 32px;
}
.pane-buttons button {
    width: 232px;
    height: 38px;
    background: #fff;
    border-radius: 6px;
    box-shadow: 0 1px 2px #888;
    font-size: 25px;
}
.style-list {
    flex: 1;
    min-height: 0;
    overflow: hidden;
    margin-top: 14px;
    padding: 0 8px;
    border: 2px solid #c4c4c4;
    background: #fff;
    list-style: none;
    font-family: Caveat, Lato, sans-serif;
    font-size: 23px;
}
.style-list li {
    display: flex;
    align-items: center;
    height: 50px;
    margin-bottom: 8px;
    padding-left: 22px;
    border: 2px solid #a8a8a8;
}
.style-list .clipped {
    height: 40px;
    border-top: none;
}
.style-list .quote {
    justify-content: center;
    color: #555;
}
.style-list .caption {
    font-size: 16px;
}
.style-list .on {
    border-color: #6a9fd8;
}
.num {
    margin-right: 14px;
}
.style-list .h1 {
    font-size: 34px;
    font-weight: bold;
    color: #4ab0d0;
}
.style-list .h2 {
    padding-left: 40px;
    font-size: 32px;
    font-weight: bold;
    color: #a0c956;
}
.style-list .h3 {
    padding-left: 60px;
    font-size: 27px;
    font-weight: bold;
    color: #4ab0d0;
}
.style-list .h4 {
    padding-left: 76px;
    color: #a0c956;
}
.style-list .h5 {
    padding-left: 94px;
    color: #4ab0d0;
}
.style-list .h6 {
    padding-left: 112px;
    color: #a0c956;
}
.style-list .info {
    color: #5c92e6;
}
.style-list .l2 {
    padding-left: 36px;
}
.style-list .l3 {
    padding-left: 50px;
}
.style-list .l4 {
    padding-left: 64px;
}
.style-list .l5 {
    padding-left: 78px;
}
.style-list .l6 {
    padding-left: 92px;
}
.style-list .l7 {
    padding-left: 106px;
}
.style-list .l8 {
    padding-left: 120px;
}
.bullet::before {
    content: "";
    width: 9px;
    height: 9px;
    margin-right: 16px;
    border-radius: 50%;
    background: #4ab0d0;
}
.l2::before, .l4::before, .l6::before, .l8::before {
    background: #a0c956;
}
.list-filter {
    display: flex;
    align-items: center;
    justify-content: space-between;
    margin: 24px 0 26px;
    font-size: 25px;
}
.filter-box {
    position: relative;
    width: 460px;
    height: 46px;
}
.filter-box select {
    appearance: none;
    width: 100%;
    height: 100%;
    padding: 0 6px;
    border: 2px solid #c4c4c4;
    border-radius: 6px;
    background: linear-gradient(#f4f4f4, #e4e4e4);
    font-size: 20px;
}
.filter-box svg {
    position: absolute;
    right: 7px;
    top: 11px;
}
.check {
    display: flex;
    align-items: center;
    gap: 8px;
    height: 40px;
    color: #222;
    font-size: 25px;
    white-space: nowrap;
}
.check input {
    appearance: none;
    width: 28px;
    height: 28px;
    margin: 0;
    border: 1px solid #bbb;
    border-radius: 5px;
    background: #fff;
}

/* status bar */
.status {
    flex: none;
    display: flex;
    align-items: center;
    height: 46px;
    padding: 0 50px 0 48px;
    background: #2b579a;
    color: #f4f4f4;
    font-size: 24px;
}
.st-words {
    margin: 0 40px;
}
.st-lang {
    margin: 0 auto 0 42px;
}
.status .focus {
    margin-right: 22px;
    font-size: 24px;
    font-weight: normal;
}
.views {
    display: flex;
    align-items: center;
    margin-right: 16px;
}
.view {
    display: flex;
    align-items: center;
    justify-content: center;
    width: 72px;
    height: 46px;
}
.view.on {
    background: #24487c;
}
.zoom {
    appearance: none;
    width: 196px;
    height: 24px;
    margin: 0 16px;
    background: none;
}
.zoom::-webkit-slider-runnable-track {
    height: 8px;
    border-radius: 4px;
    background: #1d3d6c;
}
.zoom::-webkit-slider-thumb {
    appearance: none;
    width: 22px;
    height: 22px;
    margin-top: -7px;
    border-radius: 50%;
    background: #f6f6f6;
}
.st-zoom {
    margin-left: 32px;
}
```
